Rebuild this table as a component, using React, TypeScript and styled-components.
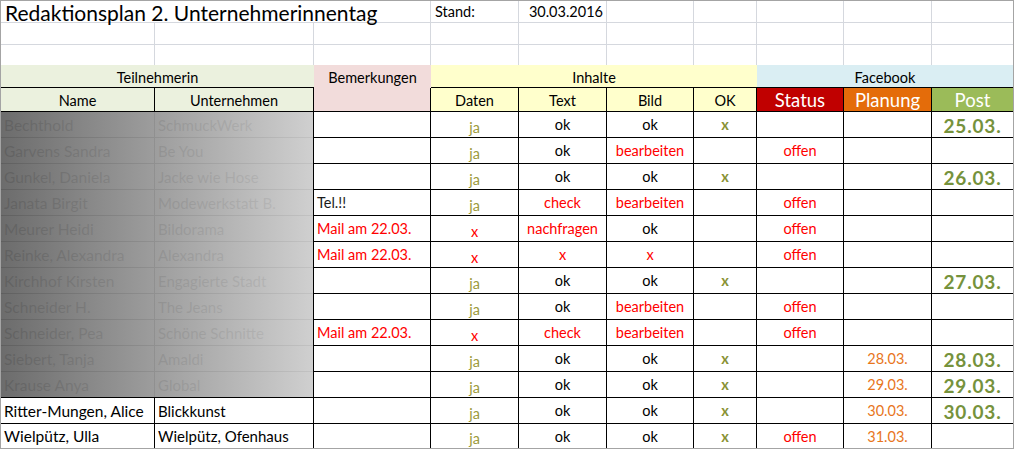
import React from 'react';
import styled, { createGlobalStyle, css } from 'styled-components';

const GlobalStyle = createGlobalStyle`
  html, body { margin: 0; padding: 0; background: #fff; }
  body { font-family: Lato, "Liberation Sans", sans-serif; }
`;

const COLS = [154, 159, 117, 88, 88, 87, 63, 87, 88, 81];

const GRID_LINE = '#d5d8de';
const INK = '#000';
const OLIVE = '#9c9a3c';
const OK_GREEN = '#8a9234';
const POST_GREEN = '#76923c';
const RED = '#ff0000';
const ORANGE = '#e8761c';

type Row = {
  name: string;
  company: string;
  note?: string;
  daten: string;
  text: string;
  bild: string;
  ok?: boolean;
  status?: string;
  planung?: string;
  post?: string;
};

const rows: Row[] = [
  { name: 'Bechthold', company: 'SchmuckWerk', daten: 'ja', text: 'ok', bild: 'ok', ok: true, post: '25.03.' },
  { name: 'Garvens Sandra', company: 'Be You', daten: 'ja', text: 'ok', bild: 'bearbeiten', status: 'offen' },
  { name: 'Gunkel, Daniela', company: 'Jacke wie Hose', daten: 'ja', text: 'ok', bild: 'ok', ok: true, post: '26.03.' },
  { name: 'Janata Birgit', company: 'Modewerkstatt B.', note: 'Tel.!!', daten: 'ja', text: 'check', bild: 'bearbeiten', status: 'offen' },
  { name: 'Meurer Heidi', company: 'Bildorama', note: 'Mail am 22.03.', daten: 'x', text: 'nachfragen', bild: 'ok', status: 'offen' },
  { name: 'Reinke, Alexandra', company: 'Alexandra', note: 'Mail am 22.03.', daten: 'x', text: 'x', bild: 'x', status: 'offen' },
  { name: 'Kirchhof Kirsten', company: 'Engagierte Stadt', daten: 'ja', text: 'ok', bild: 'ok', ok: true, post: '27.03.' },
  { name: 'Schneider H.', company: 'The Jeans', daten: 'ja', text: 'ok', bild: 'bearbeiten', status: 'offen' },
  { name: 'Schneider, Pea', company: 'Schöne Schnitte', note: 'Mail am 22.03.', daten: 'x', text: 'check', bild: 'bearbeiten', status: 'offen' },
  { name: 'Siebert, Tanja', company: 'Amaldi', daten: 'ja', text: 'ok', bild: 'ok', ok: true, planung: '28.03.', post: '28.03.' },
  { name: 'Krause Anya', company: 'Global', daten: 'ja', text: 'ok', bild: 'ok', ok: true, planung: '29.03.', post: '29.03.' },
  { name: 'Ritter-Mungen, Alice', company: 'Blickkunst', daten: 'ja', text: 'ok', bild: 'ok', ok: true, planung: '30.03.', post: '30.03.' },
  { name: 'Wielpütz, Ulla', company: 'Wielpütz, Ofenhaus', daten: 'ja', text: 'ok', bild: 'ok', ok: true, status: 'offen', planung: '31.03.' },
];

const cols = css`
  display: grid;
  grid-template-columns: ${COLS.map((c) => c + 'px').join(' ')};
`;

const Sheet = styled.div`
  width: 1014px;
  height: 449px;
  box-sizing: border-box;
  border: 1px solid #a4a4a4;
  display: flex;
  flex-direction: column;
  overflow: hidden;
  background: #fff;
  color: ${INK};
  font-size: 14.5px;
`;

const TopArea = styled.div`
  ${cols};
  grid-template-rows: 22px 22px 20px;
`;

const Blank = styled.div<{ $end?: boolean; $span?: number; $bottomless?: boolean }>`
  box-sizing: border-box;
  grid-column: span ${(p) => p.$span ?? 1};
  border-right: ${(p) => (p.$end ? 'none' : `1px solid ${GRID_LINE}`)};
  border-bottom: ${(p) => (p.$bottomless ? 'none' : `1px solid ${GRID_LINE}`)};
  display: flex;
  align-items: center;
  padding: 0 4px;
  white-space: nowrap;
`;

const Title = styled(Blank)`
  font-size: 21px;
  padding-left: 4px;
  padding-top: 1px;
`;

const DateValue = styled(Blank)`
  justify-content: flex-end;
  padding-right: 3px;
`;

const Header = styled.div`
  ${cols};
  grid-template-rows: 23px 24px;
`;

const GroupHead = styled.div<{ $bg: string; $span: number }>`
  box-sizing: border-box;
  grid-column: span ${(p) => p.$span};
  background: ${(p) => p.$bg};
  border-bottom: 1px solid ${INK};
  display: flex;
  align-items: center;
  justify-content: center;
  padding-top: 2px;
`;

const NoteHead = styled.div`
  background: #f2dcdb;
  display: flex;
  align-items: center;
  justify-content: center;
  padding-top: 2px;
`;

const ColHead = styled.div<{ $bg: string; $color?: string; $big?: boolean; $end?: boolean }>`
  box-sizing: border-box;
  background: ${(p) => p.$bg};
  color: ${(p) => p.$color ?? INK};
  font-size: ${(p) => (p.$big ? '18.5px' : '14.5px')};
  border-right: ${(p) => (p.$end ? 'none' : `1px solid ${INK}`)};
  border-bottom: 1px solid ${INK};
  display: flex;
  align-items: center;
  justify-content: center;
  padding-top: ${(p) => (p.$big ? '0' : '2px')};
`;

const Body = styled.div`
  ${cols};
  grid-template-rows: repeat(12, 26px) 24px;
  position: relative;
`;

const Cell = styled.div<{
  $color?: string;
  $left?: boolean;
  $bold?: boolean;
  $size?: number;
  $drop?: number;
  $end?: boolean;
  $last?: boolean;
  $track?: number;
}>`
  box-sizing: border-box;
  border-right: ${(p) => (p.$end ? 'none' : `1px solid ${INK}`)};
  border-bottom: ${(p) => (p.$last ? 'none' : `1px solid ${INK}`)};
  color: ${(p) => p.$color ?? INK};
  font-weight: ${(p) => (p.$bold ? 700 : 400)};
  font-size: ${(p) => (p.$size ?? 14.5) + 'px'};
  letter-spacing: ${(p) => (p.$track ?? 0) + 'px'};
  display: flex;
  align-items: center;
  justify-content: ${(p) => (p.$left ? 'flex-start' : 'center')};
  padding: ${(p) => p.$drop ?? 0}px ${(p) => (p.$left ? '3px' : '0')} 0;
  white-space: nowrap;
  overflow: hidden;
`;

const Shade = styled.div`
  position: absolute;
  left: 0;
  top: 0;
  width: 312px;
  height: 285px;
  background: linear-gradient(to right, rgba(100, 100, 100, 0.95), rgba(205, 205, 205, 0.95));
  pointer-events: none;
`;

const tone = (v: string) => (v === 'ok' ? INK : RED);

export default function App() {
  return (
    <>
      <GlobalStyle />
      <Sheet>
        <TopArea>
          <Title $span={3}>Redaktionsplan 2. Unternehmerinnentag</Title>
          <Blank>Stand:</Blank>
          <DateValue>30.03.2016</DateValue>
          {[5, 6, 7, 8, 9].map((i) => (
            <Blank key={'r1' + i} $end={i === 9} />
          ))}
          {[0, 1].map((r) =>
            COLS.map((_, i) => <Blank key={`r${r}-${i}`} $end={i === 9} $bottomless={r === 1} />)
          )}
        </TopArea>

        <Header>
          <GroupHead $bg="#ebf1de" $span={2}>Teilnehmerin</GroupHead>
          <NoteHead>Bemerkungen</NoteHead>
          <GroupHead $bg="#ffffcc" $span={4}>Inhalte</GroupHead>
          <GroupHead $bg="#daeef3" $span={3}>Facebook</GroupHead>
          <ColHead $bg="#ebf1de">Name</ColHead>
          <ColHead $bg="#ebf1de">Unternehmen</ColHead>
          <ColHead $bg="#f2dcdb" />
          <ColHead $bg="#ffffcc">Daten</ColHead>
          <ColHead $bg="#ffffcc">Text</ColHead>
          <ColHead $bg="#ffffcc">Bild</ColHead>
          <ColHead $bg="#ffffcc">OK</ColHead>
          <ColHead $bg="#c00000" $color="#fff" $big>Status</ColHead>
          <ColHead $bg="#e46c0a" $color="#fff" $big>Planung</ColHead>
          <ColHead $bg="#9bbb59" $color="#fff" $big $end>Post</ColHead>
        </Header>

        <Body>
          {rows.map((r, i) => {
            const last = i === rows.length - 1;
            return (
              <React.Fragment key={r.name}>
                <Cell $left $last={last} $size={15.5}>{r.name}</Cell>
                <Cell $left $last={last} $size={15}>{r.company}</Cell>
                <Cell $left $last={last} $color={r.note === 'Tel.!!' ? '#1a1a1a' : RED}>{r.note}</Cell>
                <Cell $last={last} $drop={5} $color={r.daten === 'ja' ? OLIVE : RED}>{r.daten}</Cell>
                <Cell $last={last} $color={tone(r.text)}>{r.text}</Cell>
                <Cell $last={last} $color={tone(r.bild)}>{r.bild}</Cell>
                <Cell $last={last} $bold $color={OK_GREEN}>{r.ok ? 'x' : ''}</Cell>
                <Cell $last={last} $color={RED}>{r.status}</Cell>
                <Cell $last={last} $color={ORANGE}>{r.planung}</Cell>
                <Cell $last={last} $end $bold $size={19} $track={0.8} $drop={2} $color={POST_GREEN}>
                  {r.post}
                </Cell>
              </React.Fragment>
            );
          })}
          <Shade />
        </Body>
      </Sheet>
    </>
  );
}
